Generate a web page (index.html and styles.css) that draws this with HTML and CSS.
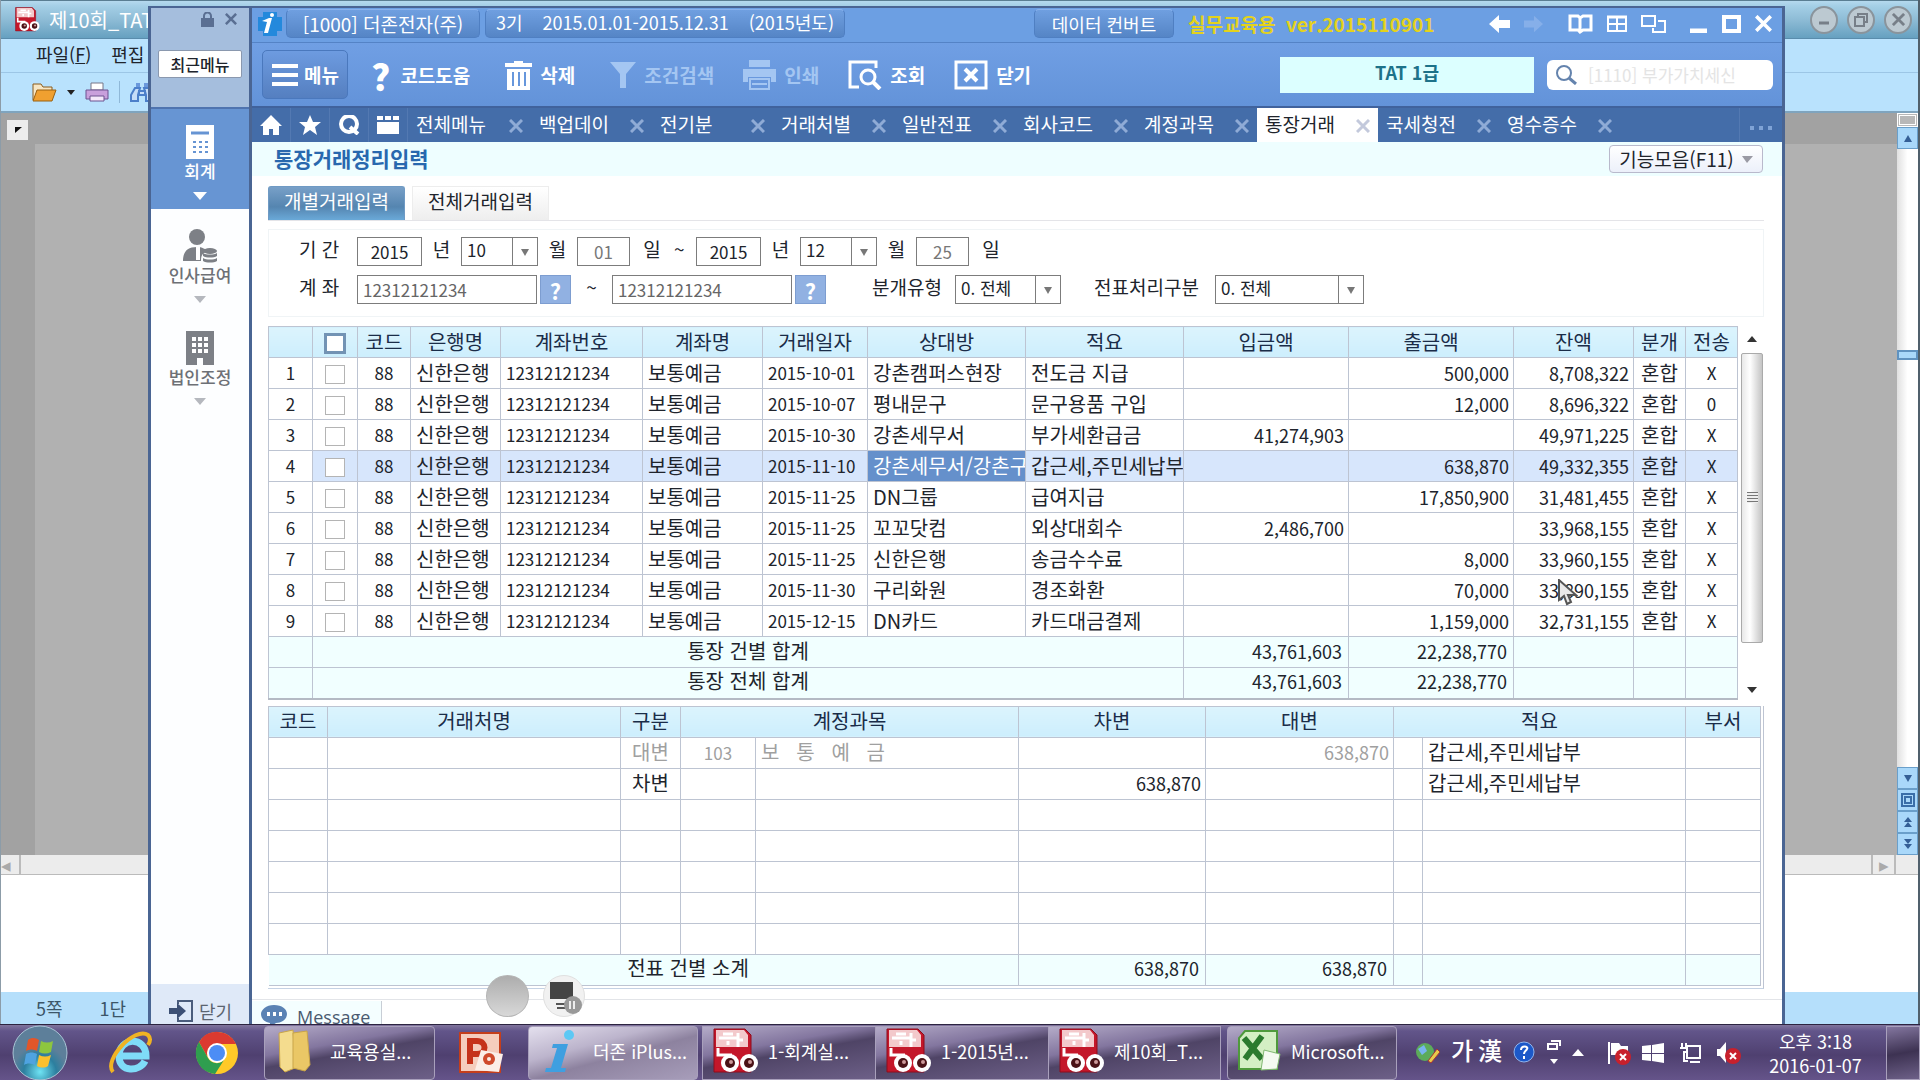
FILE: index.html
```
<!DOCTYPE html>
<html lang="ko">

<head>
    <meta charset="utf-8">
    <meta name="viewport" content="width=device-width, initial-scale=1.0">
    <title>통장거래정리입력</title>
    <link rel="stylesheet" href="styles.css">
</head>

<body>
    <svg width="0" height="0" class="defs">
        <defs>
            <symbol id="hwp" viewBox="0 0 46 46">
                <path d="M1 1h31l6 6v37H1z" fill="#c4172a" stroke="#8d0d1c" />
                <path d="M3 2h28l4 5v12H3z" fill="#f3c9cb" />
                <path d="M10 6h10M6 10h18M15 13v4M5 20v7h14M25 5v14M25 12h5" stroke="#fff" stroke-width="3" fill="none" />
                <circle cx="17" cy="35" r="9" fill="#fff" />
                <circle cx="36" cy="35" r="9" fill="#fff" />
                <circle cx="17" cy="35" r="5" fill="#4a1216" />
                <circle cx="36" cy="35" r="5" fill="#4a1216" />
                <circle cx="18" cy="34" r="2" fill="#c99" />
                <circle cx="37" cy="34" r="2" fill="#c99" />
            </symbol>
            <symbol id="x" viewBox="0 0 14 14">
                <path d="M1 1l12 12M13 1L1 13" stroke="currentColor" stroke-width="3" />
            </symbol>
        </defs>
    </svg>

    <div class="desktop">
        <!-- document window behind -->
        <div class="doc">
            <header class="doc-title">
                <svg width="25" height="25"><use href="#hwp" /></svg>
                <span>제10회_TAT</span>
                <div class="doc-buttons">
                    <button aria-label="최소화"><svg width="12" height="12"><path d="M1 9h10" stroke="#777f88" stroke-width="3" /></svg></button>
                    <button aria-label="이전 크기"><svg width="14" height="14"><path d="M4 4V1h9v8h-3M1 4h9v9H1z" stroke="#777f88" stroke-width="2" fill="none" /></svg></button>
                    <button aria-label="닫기"><svg width="13" height="13" color="#777f88"><use href="#x" /></svg></button>
                </div>
            </header>
            <nav class="doc-menu">
                <a href="#">파일(<u>F</u>)</a>
                <a href="#">편집</a>
            </nav>
            <div class="doc-tools">
                <svg width="25" height="20" viewBox="0 0 25 20"><path d="M1 18V2h8l2 3h9v4" fill="#f7e6c4" stroke="#8a5a1a" /><path d="M5 8h19l-4 11H1z" fill="#f0a030" stroke="#9a6010" /></svg>
                <svg width="8" height="5"><path d="M0 0h8L4 5z" fill="#222" /></svg>
                <svg width="24" height="20" viewBox="0 0 24 20"><path d="M6 1h12v7H6z" fill="#fff" stroke="#778" /><path d="M1 8h22v9H1z" fill="#c9a0dc" stroke="#6d5290" /><path d="M5 14h14v5H5z" fill="#f4e8fa" stroke="#6d5290" /></svg>
                <i></i>
                <svg width="24" height="20" viewBox="0 0 24 20"><path d="M6 1h4v6H6zM14 1h4v6h-4z" fill="#6a98dc" /><path d="M5 6L1 13v6h7v-6l2-7zM19 6l4 7v6h-7v-6l-2-7zM9 9h6v4H9z" fill="#c6ddf8" stroke="#4c7fca" stroke-width="2" /></svg>
            </div>
            <div class="doc-body">
                <div class="doc-canvas">
                    <div class="doc-corner"><svg width="8" height="8"><path d="M1 1h7L1 7z" fill="#111" /></svg></div>
                    <div class="doc-page"></div>
                </div>
                <div class="doc-scroll">
                    <div class="split"></div>
                    <div class="key"><svg width="8" height="7"><path d="M4 0l4 7H0z" fill="#345f96" /></svg></div>
                    <div class="track"></div>
                    <div class="mark"></div>
                    <div class="track track-long"></div>
                    <div class="key"><svg width="8" height="7"><path d="M0 0h8L4 7z" fill="#345f96" /></svg></div>
                    <div class="key"><svg width="14" height="14"><path d="M1 1h12v12H1zM4 4h6v6H4z" fill="none" stroke="#3a6ea8" stroke-width="2" /></svg></div>
                    <div class="key"><svg width="8" height="10"><path d="M4 0l4 5H0zM4 5l4 5H0z" fill="#345f96" /></svg></div>
                    <div class="key"><svg width="8" height="10"><path d="M0 0h8L4 5zM0 5h8l-4 5z" fill="#345f96" /></svg></div>
                </div>
            </div>
            <div class="doc-hscroll">
                <span>◂</span>
                <span class="right">▸</span>
            </div>
            <div class="doc-blank"></div>
            <footer class="doc-status"><span>5쪽</span><span>1단</span></footer>
        </div>

        <!-- accounting program -->
        <div class="app">
            <aside class="side">
                <div class="side-top">
                    <div class="side-icons">
                        <svg width="15" height="15" viewBox="0 0 15 15"><path d="M4 7V4a3 3 0 0 1 7 0v3" fill="none" stroke="#5a6f92" stroke-width="2" /><path d="M1 6h13v9H1z" fill="#5a6f92" /></svg>
                        <svg width="12" height="12" color="#5a6f92"><use href="#x" /></svg>
                    </div>
                    <button class="recent">최근메뉴</button>
                </div>
                <a href="#" class="module on">
                    <svg width="28" height="34" viewBox="0 0 28 34"><path d="M0 0h28v34H0z" fill="#fff" /><path d="M5 8h18" stroke="#6694d3" stroke-width="3" /><path d="M7 17h3m3 0h3m3 0h3M7 22h3m3 0h3m3 0h3M7 27h3m3 0h3m3 0h3" stroke="#6694d3" stroke-width="2" /></svg>
                    <span>회계</span>
                    <svg width="14" height="8"><path d="M0 0h14L7 8z" fill="#fff" /></svg>
                </a>
                <a href="#" class="module">
                    <svg width="34" height="34" viewBox="0 0 34 34" fill="#7d8086"><circle cx="14" cy="8" r="8" /><path d="M0 32c0-9 4-14 14-14 5 0 9 2 11 5-5 0-7 3-7 9z" /><path d="M13 18l4 0 0 13h-4z" fill="#fff" /><ellipse cx="27" cy="22" rx="7" ry="3" /><path d="M20 24c3 2 11 2 14 0v3c-3 2-11 2-14 0zM20 29c3 2 11 2 14 0v3c-3 2-11 2-14 0z" /></svg>
                    <span>인사급여</span>
                    <svg width="12" height="7"><path d="M0 0h12L6 7z" fill="#b5b8be" /></svg>
                </a>
                <a href="#" class="module">
                    <svg width="28" height="34" viewBox="0 0 28 34"><path d="M0 0h28v34H17v-7h-6v7H0z" fill="#7d8086" /><path d="M6 8h4m2 0h4m2 0h4M6 14h4m2 0h4m2 0h4M6 20h4m2 0h4m2 0h4" stroke="#fff" stroke-width="4" /></svg>
                    <span>법인조정</span>
                    <svg width="12" height="7"><path d="M0 0h12L6 7z" fill="#b5b8be" /></svg>
                </a>
                <button class="side-close">
                    <svg width="25" height="24" viewBox="0 0 25 24"><path d="M9 5V2h14v20H9v-3" fill="none" stroke="#4a5c7c" stroke-width="2" /><path d="M0 9h8V4l9 8-9 8v-5H0z" fill="#3d5075" /></svg>
                    닫기
                </button>
            </aside>

            <main class="main">
                <header class="titlebar">
                    <svg class="logo" width="24" height="24" viewBox="0 0 24 24"><path d="M5 0h14v5h5v14h-5v5H5v-5H0V5h5z" fill="#2489dc" /><path d="M4 9l7-3h3l-4 15H6l3-11z" fill="#fff" /><circle cx="14" cy="3" r="2" fill="#fff" /></svg>
                    <button class="pill company">[1000] 더존전자(주)</button>
                    <button class="pill period"><span>3기</span><span>2015.01.01-2015.12.31</span><span>(2015년도)</span></button>
                    <button class="pill convert">데이터 컨버트</button>
                    <span class="version">실무교육용&nbsp; ver.2015110901</span>
                    <div class="win-icons">
                        <svg width="21" height="18" viewBox="0 0 21 18"><path d="M0 9l10-9v5h11v8H10v5z" fill="#fff" /></svg>
                        <svg width="19" height="18" viewBox="0 0 21 18"><path d="M21 9L11 0v5H0v8h11v5z" fill="#86afe9" /></svg>
                        <svg class="gap" width="25" height="20" viewBox="0 0 25 20"><path d="M2 2h8l2 2 3-2h8v14h-8l-3 2-2-2H2zM12 4v13" fill="none" stroke="#fff" stroke-width="3" /></svg>
                        <svg width="20" height="18" viewBox="0 0 20 18"><path d="M1 2h18v14H1zM1 9h18M10 2v14" fill="none" stroke="#fff" stroke-width="2" /><path d="M0 2h20" stroke="#fff" stroke-width="3" /></svg>
                        <svg width="25" height="20" viewBox="0 0 25 20"><path d="M1 2h13v10H1z" fill="none" stroke="#fff" stroke-width="2" /><path d="M17 7h7v11H12v-4" fill="none" stroke="#fff" stroke-width="2" /></svg>
                        <svg class="gap" width="17" height="18"><path d="M0 16h17" stroke="#fff" stroke-width="5" /></svg>
                        <svg width="19" height="18"><path d="M2 2h15v14H2z" fill="none" stroke="#fff" stroke-width="4" /></svg>
                        <svg width="17" height="17" color="#fff"><use href="#x" /></svg>
                    </div>
                </header>

                <div class="toolbar">
                    <button class="menu-btn"><svg width="26" height="24"><path d="M0 3h26M0 12h26M0 21h26" stroke="#fff" stroke-width="4" /></svg>메뉴</button>
                    <button class="t-help"><b>?</b>코드도움</button>
                    <button class="t-del"><svg width="27" height="30" viewBox="0 0 27 30"><path d="M9 3V1h9v2h9v4H0V3z" fill="#fff" /><path d="M2 9h23v21H2z" fill="#fff" /><path d="M8 12v14M14 12v14M20 12v14" stroke="#6797dc" stroke-width="2" /></svg>삭제</button>
                    <button class="t-filter" disabled><svg width="26" height="26"><path d="M0 0h26L16 12v14h-6V12z" fill="#a4c6f2" /></svg>조건검색</button>
                    <button class="t-print" disabled><svg width="33" height="30" viewBox="0 0 33 30"><path d="M6 0h21v7H6zM0 9h33v13h-5v-5H5v5H0z" fill="#a4c6f2" /><path d="M7 19h19v10H7z" fill="none" stroke="#a4c6f2" stroke-width="2" /><path d="M9 24h15" stroke="#a4c6f2" stroke-width="2" /></svg>인쇄</button>
                    <button class="t-find"><svg width="34" height="30" viewBox="0 0 34 30"><path d="M28 8V2H2v25h9" fill="none" stroke="#fff" stroke-width="3" /><circle cx="20" cy="17" r="7" fill="none" stroke="#fff" stroke-width="3" /><path d="M25 22l7 7" stroke="#fff" stroke-width="4" /></svg>조회</button>
                    <button class="t-close"><svg width="34" height="30" viewBox="0 0 34 30"><path d="M2 2h30v26H2z" fill="none" stroke="#fff" stroke-width="3" /><path d="M11 9l12 12M23 9L11 21" stroke="#fff" stroke-width="4" /></svg>닫기</button>
                    <div class="grade">TAT 1급</div>
                    <label class="search">
                        <svg width="22" height="20" viewBox="0 0 22 20"><circle cx="8" cy="8" r="7" fill="none" stroke="#6483ad" stroke-width="2" /><path d="M13 13l7 6" stroke="#6483ad" stroke-width="3" /></svg>
                        <input type="text" aria-label="검색" placeholder="[1110] 부가가치세신">
                    </label>
                </div>

                <nav class="tabs">
                    <a href="#" class="quick"><svg width="22" height="20" viewBox="0 0 22 20"><path d="M11 0l11 11h-3v9h-6v-6H9v6H3v-9H0z" fill="#fff" /></svg></a>
                    <a href="#" class="quick"><svg width="22" height="20" viewBox="0 0 22 20"><path d="M11 0l3 7h8l-6 5 2 8-7-5-7 5 2-8-6-5h8z" fill="#fff" /></svg></a>
                    <a href="#" class="quick"><svg width="21" height="20" viewBox="0 0 21 20"><ellipse cx="10" cy="9" rx="8" ry="8" fill="none" stroke="#fff" stroke-width="4" /><path d="M11 12l8 7" stroke="#fff" stroke-width="4" /></svg></a>
                    <a href="#" class="quick"><svg width="22" height="18" viewBox="0 0 22 18"><path d="M0 0h6v4H0zM8 0h6v4H8zM16 0h6v4h-6zM0 6h22v12H0z" fill="#fff" /></svg></a>
                    <a href="#" class="tab">전체메뉴<svg><use href="#x" /></svg></a>
                    <a href="#" class="tab">백업데이<svg><use href="#x" /></svg></a>
                    <a href="#" class="tab">전기분<svg><use href="#x" /></svg></a>
                    <a href="#" class="tab">거래처별<svg><use href="#x" /></svg></a>
                    <a href="#" class="tab">일반전표<svg><use href="#x" /></svg></a>
                    <a href="#" class="tab">회사코드<svg><use href="#x" /></svg></a>
                    <a href="#" class="tab">계정과목<svg><use href="#x" /></svg></a>
                    <a href="#" class="tab active">통장거래<svg><use href="#x" /></svg></a>
                    <a href="#" class="tab">국세청전<svg><use href="#x" /></svg></a>
                    <a href="#" class="tab">영수증수<svg><use href="#x" /></svg></a>
                    <button class="more" aria-label="더보기"><svg width="22" height="4"><path d="M0 2h4m5 0h4m5 0h4" stroke="#7fa3d6" stroke-width="4" /></svg></button>
                </nav>

                <div class="heading">
                    <h1>통장거래정리입력</h1>
                    <button class="functions">기능모음(F11)<svg width="11" height="7"><path d="M0 0h11L5 7z" fill="#9a9aa4" /></svg></button>
                </div>

                <div class="content">
                    <nav class="subtabs">
                        <a href="#" class="on">개별거래입력</a>
                        <a href="#">전체거래입력</a>
                    </nav>

                    <form class="filters">
                        <div class="line">
                            <label class="first" for="y1">기 간</label>
                            <input id="y1" class="year" value="2015"><label class="unit" for="y1">년</label>
                            <span class="combo month"><select id="m1"><option>10</option></select></span><label class="unit" for="m1">월</label>
                            <input id="d1" class="day" value="01"><label class="unit" for="d1">일</label>
                            <span class="unit">~</span>
                            <input id="y2" class="year" value="2015"><label class="unit" for="y2">년</label>
                            <span class="combo month"><select id="m2"><option>12</option></select></span><label class="unit" for="m2">월</label>
                            <input id="d2" class="day" value="25"><label class="unit" for="d2">일</label>
                        </div>
                        <div class="line">
                            <label class="first" for="a1">계 좌</label>
                            <input id="a1" class="account" value="12312121234"><button type="button" class="help">?</button>
                            <span class="tilde">~</span>
                            <input class="account" aria-label="계좌 끝" value="12312121234"><button type="button" class="help">?</button>
                            <label class="kind" for="s1">분개유형</label>
                            <span class="combo kind-box"><select id="s1"><option>0. 전체</option></select></span>
                            <label class="state" for="s2">전표처리구분</label>
                            <span class="combo state-box"><select id="s2"><option>0. 전체</option></select></span>
                        </div>
                    </form>

                    <div class="ledger">
                        <table>
                            <colgroup>
                                <col style="width:44px"><col style="width:45px"><col style="width:53px"><col style="width:90px"><col style="width:142px"><col style="width:120px"><col style="width:105px"><col style="width:158px"><col style="width:158px"><col style="width:165px"><col style="width:165px"><col style="width:120px"><col style="width:52px"><col style="width:52px">
                            </colgroup>
                            <thead>
                                <tr><th></th><th><input type="checkbox" aria-label="전체 선택"></th><th>코드</th><th>은행명</th><th>계좌번호</th><th>계좌명</th><th>거래일자</th><th>상대방</th><th>적요</th><th>입금액</th><th>출금액</th><th>잔액</th><th>분개</th><th>전송</th></tr>
                            </thead>
                            <tbody>
                                <tr><td class="c">1</td><td class="c"><input type="checkbox" aria-label="1"></td><td class="c">88</td><td>신한은행</td><td class="d">12312121234</td><td>보통예금</td><td class="d">2015-10-01</td><td>강촌캠퍼스현장</td><td>전도금 지급</td><td class="n"></td><td class="n">500,000</td><td class="n">8,708,322</td><td class="k">혼합</td><td class="c">X</td></tr>
                                <tr><td class="c">2</td><td class="c"><input type="checkbox" aria-label="2"></td><td class="c">88</td><td>신한은행</td><td class="d">12312121234</td><td>보통예금</td><td class="d">2015-10-07</td><td>평내문구</td><td>문구용품 구입</td><td class="n"></td><td class="n">12,000</td><td class="n">8,696,322</td><td class="k">혼합</td><td class="c">0</td></tr>
                                <tr><td class="c">3</td><td class="c"><input type="checkbox" aria-label="3"></td><td class="c">88</td><td>신한은행</td><td class="d">12312121234</td><td>보통예금</td><td class="d">2015-10-30</td><td>강촌세무서</td><td>부가세환급금</td><td class="n">41,274,903</td><td class="n"></td><td class="n">49,971,225</td><td class="k">혼합</td><td class="c">X</td></tr>
                                <tr class="selected"><td class="c">4</td><td class="c"><input type="checkbox" aria-label="4"></td><td class="c">88</td><td>신한은행</td><td class="d">12312121234</td><td>보통예금</td><td class="d">2015-11-10</td><td class="cell-on">강촌세무서/강촌구</td><td>갑근세,주민세납부</td><td class="n"></td><td class="n">638,870</td><td class="n">49,332,355</td><td class="k">혼합</td><td class="c">X</td></tr>
                                <tr><td class="c">5</td><td class="c"><input type="checkbox" aria-label="5"></td><td class="c">88</td><td>신한은행</td><td class="d">12312121234</td><td>보통예금</td><td class="d">2015-11-25</td><td>DN그룹</td><td>급여지급</td><td class="n"></td><td class="n">17,850,900</td><td class="n">31,481,455</td><td class="k">혼합</td><td class="c">X</td></tr>
                                <tr><td class="c">6</td><td class="c"><input type="checkbox" aria-label="6"></td><td class="c">88</td><td>신한은행</td><td class="d">12312121234</td><td>보통예금</td><td class="d">2015-11-25</td><td>꼬꼬닷컴</td><td>외상대회수</td><td class="n">2,486,700</td><td class="n"></td><td class="n">33,968,155</td><td class="k">혼합</td><td class="c">X</td></tr>
                                <tr><td class="c">7</td><td class="c"><input type="checkbox" aria-label="7"></td><td class="c">88</td><td>신한은행</td><td class="d">12312121234</td><td>보통예금</td><td class="d">2015-11-25</td><td>신한은행</td><td>송금수수료</td><td class="n"></td><td class="n">8,000</td><td class="n">33,960,155</td><td class="k">혼합</td><td class="c">X</td></tr>
                                <tr><td class="c">8</td><td class="c"><input type="checkbox" aria-label="8"></td><td class="c">88</td><td>신한은행</td><td class="d">12312121234</td><td>보통예금</td><td class="d">2015-11-30</td><td>구리화원</td><td>경조화환</td><td class="n"></td><td class="n">70,000</td><td class="n">33,890,155</td><td class="k">혼합</td><td class="c">X</td></tr>
                                <tr><td class="c">9</td><td class="c"><input type="checkbox" aria-label="9"></td><td class="c">88</td><td>신한은행</td><td class="d">12312121234</td><td>보통예금</td><td class="d">2015-12-15</td><td>DN카드</td><td>카드대금결제</td><td class="n"></td><td class="n">1,159,000</td><td class="n">32,731,155</td><td class="k">혼합</td><td class="c">X</td></tr>
                            </tbody>
                            <tfoot>
                                <tr><td></td><td colspan="8" class="sum">통장 건별 합계</td><td class="n">43,761,603</td><td class="n">22,238,770</td><td></td><td></td><td></td></tr>
                                <tr><td></td><td colspan="8" class="sum">통장 전체 합계</td><td class="n">43,761,603</td><td class="n">22,238,770</td><td></td><td></td><td></td></tr>
                            </tfoot>
                        </table>
                        <div class="scroll">
                            <svg width="10" height="6"><path d="M5 0l5 6H0z" fill="#333" /></svg>
                            <div class="thumb"><i></i></div>
                            <svg width="10" height="6"><path d="M0 0h10L5 6z" fill="#333" /></svg>
                        </div>
                    </div>

                    <div class="journal">
                        <table>
                            <colgroup>
                                <col style="width:59px"><col style="width:293px"><col style="width:60px"><col style="width:75px"><col style="width:263px"><col style="width:187px"><col style="width:188px"><col style="width:29px"><col style="width:263px"><col style="width:75px">
                            </colgroup>
                            <thead>
                                <tr><th>코드</th><th>거래처명</th><th>구분</th><th colspan="2">계정과목</th><th>차변</th><th>대변</th><th colspan="2">적요</th><th>부서</th></tr>
                            </thead>
                            <tbody>
                                <tr><td></td><td></td><td class="k off">대변</td><td class="c off">103</td><td class="off spaced">보   통   예   금</td><td></td><td class="n off">638,870</td><td></td><td>갑근세,주민세납부</td><td></td></tr>
                                <tr><td></td><td></td><td class="k">차변</td><td></td><td></td><td class="n">638,870</td><td></td><td></td><td>갑근세,주민세납부</td><td></td></tr>
                                <tr><td></td><td></td><td></td><td></td><td></td><td></td><td></td><td></td><td></td><td></td></tr>
                                <tr><td></td><td></td><td></td><td></td><td></td><td></td><td></td><td></td><td></td><td></td></tr>
                                <tr><td></td><td></td><td></td><td></td><td></td><td></td><td></td><td></td><td></td><td></td></tr>
                                <tr><td></td><td></td><td></td><td></td><td></td><td></td><td></td><td></td><td></td><td></td></tr>
                                <tr><td></td><td></td><td></td><td></td><td></td><td></td><td></td><td></td><td></td><td></td></tr>
                            </tbody>
                            <tfoot>
                                <tr><td colspan="2" class="open"></td><td colspan="2" class="sum open">전표 건별 소계</td><td></td><td class="n">638,870</td><td class="n">638,870</td><td></td><td></td><td></td></tr>
                            </tfoot>
                        </table>
                    </div>
                </div>

                <div class="bottom">
                    <a href="#" class="message"><svg width="26" height="22" viewBox="0 0 26 22"><path d="M13 0c8 0 13 4 13 9s-5 9-11 9l-6 4v-4C3 17 0 13 0 9s5-9 13-9z" fill="#5a82b4" /><path d="M6 9h3m3 0h3m3 0h3" stroke="#fff" stroke-width="4" /></svg>Message</a>
                </div>
            </main>
        </div>

        <!-- recorder badges and pointer float above the windows -->
        <div class="badge ball"></div>
        <div class="badge screen"><svg width="34" height="34" viewBox="0 0 34 34"><path d="M2 2h23v17H2z" fill="#444" /><path d="M8 24h10M9 28h8" stroke="#555" stroke-width="2" /><circle cx="25" cy="25" r="9" fill="#999" /><path d="M22 21v8M26 21v8" stroke="#eee" stroke-width="2" /></svg></div>
        <svg class="pointer" width="20" height="27" viewBox="0 0 20 27"><path d="M1 1v20l5-4 3 8 4-2-3-7h8z" fill="#e9e9e9" stroke="#555" stroke-width="2" /></svg>
    </div>

    <footer class="taskbar">
        <button class="start" aria-label="시작"><svg width="58" height="56" viewBox="0 0 58 56"><defs><radialGradient id="orb" cy=".85"><stop offset="0" stop-color="#6fe4f4" /><stop offset=".6" stop-color="#2c7f9f" /><stop offset="1" stop-color="#5d7f9a" /></radialGradient></defs><circle cx="29" cy="28" r="27" fill="url(#orb)" stroke="#a8c4d4" /><path d="M17 15c4-3 8-2 11 0l-2 11c-4-2-7-2-11 0z" fill="#e2562a" /><path d="M30 16c4 2 8 2 12 0l-2 11c-4 2-8 2-12 0z" fill="#8dc63f" /><path d="M15 29c4-2 7-2 11 0l-2 11c-4-2-8-2-11 0z" fill="#4fa3e0" /><path d="M28 30c4 2 8 2 12 0l-3 11c-3 2-7 2-11 0z" fill="#fbc02d" /></svg></button>
        <button class="pin ie" aria-label="Internet Explorer"><svg width="46" height="46" viewBox="0 0 46 46"><path d="M11 26h28c0-20-27-19-27 0 0 17 21 16 26 5" fill="none" stroke="#7fdcf8" stroke-width="7" /><path d="M6 42C-4 30 28-4 41 5c3 3 2 7 0 10" fill="none" stroke="#f0b323" stroke-width="4" /></svg></button>
        <button class="pin chrome" aria-label="Chrome"><svg width="44" height="44" viewBox="0 0 44 44"><circle cx="22" cy="22" r="21" fill="#ffc928" /><path d="M4 11a21 21 0 0 1 37 2H22a10 10 0 0 0-9 14z" fill="#db3a30" /><path d="M4 11A21 21 0 0 0 20 43l9-14a10 10 0 0 1-16-2z" fill="#2f9e4f" /><circle cx="22" cy="22" r="10" fill="#fff" /><circle cx="22" cy="22" r="8" fill="#4c8df5" /></svg></button>
        <button class="task folder"><svg width="36" height="44" viewBox="0 0 36 44"><path d="M2 4l14-3 2 38-10 4-5-5z" fill="#f4dc8e" stroke="#c9a548" /><path d="M16 4l14-2 3 34-5 6-12-3z" fill="#eac766" stroke="#c9a548" /></svg>교육용실...</button>
        <button class="pin ppt" aria-label="PowerPoint"><svg width="46" height="42" viewBox="0 0 46 42"><path d="M2 1h40v39H2z" fill="#f5cdbd" stroke="#c43e1c" stroke-width="2" /><path d="M12 32V9h7c10 0 10 13 0 13h-6" fill="none" stroke="#c5321a" stroke-width="6" /><path d="M23 18l22 4-4 18-24-2z" fill="#fbeee8" /><circle cx="31" cy="27" r="6" fill="#cf4a2c" /><circle cx="31" cy="27" r="2" fill="#fbeee8" /></svg></button>
        <button class="task lit"><svg width="34" height="44" viewBox="0 0 34 44"><circle cx="26" cy="6" r="5" fill="#5cc8f4" /><path d="M10 15h15l-7 24h5l-1 4H2l1-4h5l6-20h-5z" fill="#3f9fe0" /></svg>더존 iPlus...</button>
        <div class="group">
            <button class="task"><svg width="46" height="46"><use href="#hwp" /></svg>1-회계실...</button>
            <button class="task"><svg width="46" height="46"><use href="#hwp" /></svg>1-2015년...</button>
            <button class="task"><svg width="46" height="46"><use href="#hwp" /></svg>제10회_T...</button>
        </div>
        <button class="task excel"><svg width="44" height="42" viewBox="0 0 44 42"><path d="M8 1h32v38H2V8z" fill="#d4efc4" stroke="#4f9a3c" stroke-width="2" /><path d="M7 8l18 21M25 6L8 29" stroke="#2b7a2e" stroke-width="6" /><path d="M27 20l16 4-3 15-16 1z" fill="#f4faf0" stroke="#82b873" /></svg>Microsoft...</button>

        <div class="tray">
            <svg width="24" height="22" viewBox="0 0 24 22"><circle cx="9" cy="10" r="9" fill="#5cab5a" /><path d="M2 7l6-4 3 6-5 4z" fill="#78b5ee" /><path d="M12 19L21 7l3 3-9 11z" fill="#e9c94b" stroke="#a33" /></svg>
            <b class="ime">가</b><b class="ime">漢</b>
            <svg width="23" height="23" viewBox="0 0 23 23"><circle cx="11" cy="11" r="10" fill="#1c58c8" stroke="#8fb4ee" /><path d="M8 9c0-5 8-4 6-1-1 2-3 2-3 5M11 15v3" stroke="#fff" stroke-width="2" fill="none" /></svg>
            <svg width="14" height="30" viewBox="0 0 14 30"><path d="M4 3h9v5M1 6h9v5H1z" fill="none" stroke="#fff" stroke-width="2" /><path d="M3 21h8l-4 5z" fill="#fff" /></svg>
            <svg width="12" height="7"><path d="M6 0l6 7H0z" fill="#fff" /></svg>
            <svg class="late" width="24" height="24" viewBox="0 0 24 24"><path d="M2 1v22" stroke="#fff" stroke-width="2" /><path d="M4 2h8l2 3h7v9H4z" fill="#fff" /><circle cx="16" cy="16" r="8" fill="#c8202c" /><path d="M13 13l6 6M19 13l-6 6" stroke="#fff" stroke-width="2" /></svg>
            <svg width="22" height="22" viewBox="0 0 22 22"><path d="M0 4l9-1v8H0zM10 3l12-2v10H10zM0 12h9v7l-9-1zM10 12h12v9l-12-2z" fill="#fff" /></svg>
            <svg class="net" width="23" height="22" viewBox="0 0 23 22"><path d="M8 4h13v12H8zM11 20h10M3 1v5m4-5v5M1 6h7v4H5v9h4" fill="none" stroke="#fff" stroke-width="2" /></svg>
            <svg class="net" width="24" height="24" viewBox="0 0 24 24"><path d="M0 8h3l6-7v21l-6-7H0z" fill="#fff" /><circle cx="16" cy="15" r="8" fill="#c8202c" /><path d="M13 12l6 6M19 12l-6 6" stroke="#fff" stroke-width="2" /></svg>
        </div>
        <div class="clock"><span>오후 3:18</span><span>2016-01-07</span></div>
        <button class="show" aria-label="바탕 화면 보기"></button>
    </footer>
</body>

</html>
```
FILE: styles.css
```
* {
    box-sizing: border-box;
}

body {
    margin: 0;
    height: 100vh;
    display: flex;
    flex-direction: column;
    overflow: hidden;
    font-family: "Noto Sans CJK KR", sans-serif;
    font-size: 19px;
    line-height: 24px;
    color: #20242c;
}

button,
input,
select {
    font: inherit;
    color: inherit;
    margin: 0;
    padding: 0;
    border: 0;
    background: none;
    border-radius: 0;
    white-space: nowrap;
}

a {
    color: inherit;
    text-decoration: none;
}

svg {
    flex: none;
    display: block;
}

.defs {
    position: absolute;
}

.desktop {
    flex: 1;
    min-height: 0;
    position: relative;
    overflow: hidden;
}

/* document window */
.doc {
    height: 100%;
    display: flex;
    flex-direction: column;
    background: #fff;
    border-right: 2px solid #50606c;
    border-left: 1px solid #8c9ca8;
}

.doc-title {
    height: 39px;
    display: flex;
    align-items: center;
    padding: 0 6px 0 14px;
    gap: 9px;
    color: #fff;
    font-size: 20px;
    border-top: 1px solid #5a7e92;
    border-bottom: 1px solid #5a8cac;
    background: linear-gradient(#b5d9ee 0, #a4cfe6 5px, #8ebcd6 50%, #66a0c0 100%);
}

.doc-buttons {
    margin-left: auto;
    display: flex;
    gap: 9px;
}

.doc-buttons button {
    width: 28px;
    height: 28px;
    border-radius: 50%;
    border: 2px solid #8a949c;
    background: #bcc9d1;
    display: flex;
    align-items: center;
    justify-content: center;
}

.doc-menu {
    height: 34px;
    padding: 3px 0 0 35px;
    display: flex;
    gap: 20px;
    font-size: 18px;
    background: #b9e2fd;
    border-bottom: 1px solid #9cc6e6;
}

.doc-tools {
    height: 40px;
    padding-left: 31px;
    display: flex;
    align-items: center;
    gap: 10px;
    background: #b9e2fd;
    border-bottom: 2px solid #7fa4be;
}

.doc-tools i {
    width: 1px;
    height: 22px;
    background: #8fb8d8;
}

.doc-body {
    flex: 1;
    display: flex;
}

.doc-canvas {
    flex: 1;
    display: flex;
    flex-direction: column;
    background: #a2a2a2;
}

.doc-corner {
    width: 21px;
    height: 20px;
    margin: 7px 0 4px 6px;
    background: #ededed;
    display: flex;
    align-items: center;
    justify-content: center;
}

.doc-page {
    flex: 1;
    margin-left: 34px;
    background: #b1b1b1;
}

.doc-scroll {
    width: 21px;
    display: flex;
    flex-direction: column;
}

.split {
    height: 14px;
    border: 3px double #fff;
    background: #b8b8b8;
}

.key {
    height: 22px;
    display: flex;
    align-items: center;
    justify-content: center;
    background: #a9d8fa;
    border: 1px solid #6a9fca;
}

.track {
    flex: 200;
    background: linear-gradient(90deg, #e0e0e0, #fff 50%);
}

.track-long {
    flex: 405;
}

.mark {
    height: 10px;
    background: #a9d8fa;
    border: 2px solid #5f92c0;
}

.doc-hscroll {
    height: 20px;
    display: flex;
    padding-right: 22px;
    background: #ececec;
    border-bottom: 1px solid #bbb;
    color: #aaa;
    line-height: 18px;
}

.doc-hscroll span {
    width: 20px;
    border-right: 2px solid #bbb;
}

.doc-hscroll .right {
    width: 25px;
    margin-left: auto;
    text-align: center;
    border-left: 2px solid #bbb;
}

.doc-blank {
    height: 117px;
}

.doc-status {
    height: 32px;
    padding: 4px 0 0 35px;
    display: flex;
    gap: 37px;
    font-size: 18px;
    color: #3b5568;
    background: #b5dffb;
}

/* program window */
.app {
    position: absolute;
    top: 6px;
    bottom: 0;
    left: 148px;
    right: 135px;
    display: flex;
    overflow: hidden;
    background: #fff;
    border: solid #4a6593;
    border-width: 2px 3px 0;
}

.side {
    width: 98px;
    display: flex;
    flex-direction: column;
    background: #fdfeff;
}

.side-top {
    height: 101px;
    background: #a5bedd;
    border-bottom: 2px solid #4f74af;
    text-align: center;
}

.side-icons {
    height: 42px;
    padding: 4px 12px 0 0;
    display: flex;
    gap: 10px;
    justify-content: flex-end;
}

.side-icons svg + svg {
    margin-top: 1px;
}

.recent {
    width: 84px;
    height: 28px;
    background: #fff;
    border: 1px solid #8a98ae;
    border-radius: 2px;
    font-size: 16px;
    font-weight: 500;
    line-height: 22px;
}

.module {
    height: 102px;
    padding-top: 18px;
    display: flex;
    flex-direction: column;
    align-items: center;
    color: #6d7076;
    font-size: 17px;
    font-weight: 500;
}

.module span {
    margin-bottom: 9px;
}

.module.on {
    height: 100px;
    padding-top: 16px;
    margin-bottom: 2px;
    background: #6795d3;
    color: #fff;
}

.side-close {
    margin-top: auto;
    height: 40px;
    padding: 15px 0 0 18px;
    display: flex;
    gap: 5px;
    background: #dfe9f8;
    color: #5b6470;
    font-size: 18px;
}

.main {
    flex: 1;
    min-width: 0;
    display: flex;
    flex-direction: column;
    border-left: 3px solid #4a6593;
}

.main > * {
    flex-shrink: 0;
}

.titlebar {
    height: 35px;
    padding: 0 0 3px 6px;
    display: flex;
    align-items: center;
    background: #6c9fe3;
    border-bottom: 1px solid #5483c6;
    color: #fff;
    font-size: 18px;
}

.pill {
    height: 29px;
    border-radius: 5px;
    background: linear-gradient(#6f9fe0, #5585c6);
    border: 1px solid #4f7fc2;
    border-top-color: #8ab2ec;
    line-height: 24px;
}

.company {
    width: 194px;
    margin: 0 5px 0 4px;
    font-size: 19px;
}

.period {
    width: 360px;
    display: flex;
    justify-content: center;
    gap: 20px;
}

.convert {
    width: 140px;
    margin-left: auto;
}

.version {
    width: 301px;
    margin-left: 14px;
    color: #e4d21c;
    font-size: 19px;
    font-weight: 700;
}

.win-icons {
    width: 293px;
    padding-right: 10px;
    display: flex;
    align-items: center;
    justify-content: space-between;
}

.win-icons .gap {
    margin-left: 10px;
}

.toolbar {
    height: 65px;
    padding: 0 9px 0 10px;
    display: flex;
    align-items: center;
    background: linear-gradient(#709fe4, #6393d9);
    border-bottom: 2px solid #40629c;
    color: #fff;
    font-weight: 700;
}

.toolbar button {
    display: flex;
    align-items: center;
    gap: 8px;
}

.toolbar button:disabled {
    color: #a4c6f2;
}

.toolbar .menu-btn {
    width: 86px;
    height: 49px;
    padding-left: 9px;
    gap: 6px;
    border: 1px solid #4a78bd;
    border-radius: 5px;
    background: linear-gradient(#6d9be0, #557fc0);
}

.toolbar .t-help {
    margin-left: 23px;
    gap: 10px;
}

.t-help b {
    font-size: 36px;
    line-height: 40px;
}

.t-del,
.t-filter {
    margin-left: 35px;
}

.t-print,
.t-find,
.t-close {
    margin-left: 29px;
}

.grade {
    width: 254px;
    height: 36px;
    margin-left: auto;
    background: #dcffff;
    color: #1d7289;
    font-size: 18px;
    line-height: 30px;
    text-align: center;
}

.search {
    width: 226px;
    height: 30px;
    margin-left: 13px;
    padding-left: 9px;
    display: flex;
    align-items: center;
    gap: 10px;
    background: #fff;
    border-radius: 6px;
}

.search input {
    flex: 1;
    min-width: 0;
    font-size: 17px;
    font-weight: 400;
}

.search input::placeholder {
    color: #e4e4e4;
}

.tabs {
    height: 34px;
    display: flex;
    background: #446da9;
    color: #fff;
}

.quick {
    width: 39px;
    display: flex;
    align-items: center;
    justify-content: center;
    border-right: 1px solid #5379b2;
}

.tab {
    width: 121px;
    padding: 0 8px 3px;
    display: flex;
    align-items: center;
    justify-content: space-between;
}

.quick + .tab {
    width: 123px;
}

.tab svg {
    width: 14px;
    height: 14px;
    margin-top: 4px;
    color: #8fabd6;
}

.tab.active {
    background: #fff;
    color: #20242c;
}

.tab.active svg {
    color: #c3c9dc;
}

.more {
    width: 43px;
    margin-left: auto;
    padding: 6px 0 0 10px;
    border-left: 1px solid #5379b2;
}

.heading {
    height: 34px;
    padding: 3px 19px 0 22px;
    display: flex;
    justify-content: space-between;
    background: #eefeff;
}

h1 {
    margin: 0;
    font-size: 21px;
    line-height: 26px;
    font-weight: 700;
    color: #2868ae;
}

.functions {
    width: 154px;
    height: 28px;
    display: flex;
    align-items: center;
    justify-content: center;
    gap: 8px;
    border: 1px solid #b9b9cc;
    border-radius: 4px;
    background: linear-gradient(#fff, #ecf0fa);
}

.content {
    padding: 10px 18px 0 16px;
}

.subtabs {
    display: flex;
    gap: 7px;
    border-bottom: 1px solid #e4e4e8;
}

.subtabs a {
    width: 137px;
    height: 34px;
    line-height: 28px;
    text-align: center;
    background: linear-gradient(#fff, #eee);
    border: 1px solid #ededed;
    border-bottom: 0;
}

.subtabs .on {
    background: linear-gradient(#78a0c8, #5585b0 60%, #6aa9d8);
    border-color: #6f9ac4;
    border-radius: 3px 3px 0 0;
    color: #fff;
}

.filters {
    height: 88px;
    margin: 8px 0 9px;
    padding: 7px 0 0 30px;
    border: 1px solid #f0f4f6;
    display: flex;
    flex-direction: column;
    gap: 9px;
}

.line {
    display: flex;
    height: 29px;
}

.line input,
.combo {
    height: 29px;
    border: 1px solid #7c7c7c;
    background: #fff;
    font-size: 17px;
}

.first {
    width: 58px;
}

.year {
    width: 65px;
    text-align: center;
}

.day {
    width: 53px;
    text-align: center;
    color: #777;
}

.unit {
    width: 39px;
    text-align: center;
}

.day + .unit {
    width: 44px;
}

.day + .unit + span {
    width: 22px;
    text-align: left;
}

.combo {
    position: relative;
}

.combo::before {
    content: "";
    position: absolute;
    top: 0;
    bottom: 0;
    right: 24px;
    width: 1px;
    background: #7c7c7c;
}

.combo::after {
    content: "";
    position: absolute;
    top: 11px;
    right: 8px;
    border: solid transparent;
    border-width: 7px 4px 0;
    border-top-color: #777;
}

.combo select {
    width: 100%;
    height: 23px;
    padding-left: 5px;
    appearance: none;
}

.month {
    width: 77px;
}

.line .account {
    width: 180px;
    padding-left: 5px;
    color: #666;
}

.help {
    width: 31px;
    height: 29px;
    margin-left: 3px;
    background: #91b1e2;
    border: 1px solid #7d9dd0;
    color: #fff;
    font-size: 22px;
    font-weight: 700;
}

.tilde {
    width: 41px;
    text-align: center;
}

.kind {
    width: 83px;
    margin-left: 46px;
}

.kind-box {
    width: 106px;
    margin-right: 33px;
}

.state {
    width: 121px;
}

.state-box {
    width: 149px;
}

table {
    width: 100%;
    table-layout: fixed;
    border-collapse: collapse;
}

tr {
    height: 31px;
}

th,
td {
    padding: 0 0 1px 5px;
    border: 1px solid #bdc4d2;
    font-size: 20px;
    font-weight: 400;
    text-align: left;
    white-space: nowrap;
    overflow: hidden;
    line-height: 24px;
}

th {
    padding-left: 0;
    text-align: center;
    background: linear-gradient(#dcf4fd, #cdeefd);
    color: #1a2c48;
}

.c {
    padding: 0;
    font-size: 17px;
    text-align: center;
}

.d {
    font-size: 17px;
}

.k {
    padding-left: 0;
    text-align: center;
}

.n {
    padding-right: 4px;
    font-size: 18px;
    text-align: right;
}

tfoot td {
    padding-bottom: 3px;
    background: #f1ffff;
}

.sum {
    padding-left: 0;
    text-align: center;
}

tfoot .n {
    padding-right: 6px;
}

td input[type="checkbox"],
th input[type="checkbox"] {
    appearance: none;
    display: block;
    width: 20px;
    height: 19px;
    margin: 3px auto 0;
    background: #fff;
    border: 1px solid #b4b4b4;
}

th input[type="checkbox"] {
    width: 22px;
    height: 21px;
    border: 3px solid #7393b4;
}

.selected td {
    background: #d7e6fc;
}

.selected td:first-child {
    background: #fff;
}

.selected .cell-on {
    background: #6590cb;
    color: #fff;
}

.ledger {
    display: flex;
    margin-bottom: 6px;
}

.ledger table {
    flex: 1;
    border-bottom: 2px solid #b4bac4;
}

.scroll {
    width: 26px;
    padding: 10px 1px 7px 3px;
    display: flex;
    flex-direction: column;
    align-items: center;
}

.thumb {
    width: 22px;
    flex: 1;
    margin: 11px 0 44px;
    display: flex;
    align-items: center;
    justify-content: center;
    border: 1px solid #aaa;
    border-radius: 2px;
    background: linear-gradient(90deg, #e8e8e8, #fff 40%, #c4c4c4);
}

.thumb i {
    width: 11px;
    height: 11px;
    background: repeating-linear-gradient(#777 0 1px, #eee 1px 3px);
}

.journal {
    padding: 0 3px 2px 0;
    border-right: 1px solid #bdc4d2;
    border-bottom: 1px solid #c4d2e4;
}

.off {
    color: #a0a0a0;
}

.spaced {
    white-space: pre;
}

.open {
    border-right: 0;
    border-left: 0;
}

.open + td {
    border-left: 0;
}

.bottom {
    margin-top: 10px;
    border-top: 1px solid #e2e4e8;
    padding-top: 1px;
}

.message {
    width: 130px;
    height: 40px;
    padding: 4px 0 0 9px;
    display: flex;
    gap: 10px;
    background: #f4feff;
    border-right: 1px solid #c8ced6;
    color: #4a5a70;
    font-family: "Open Sans", sans-serif;
    font-size: 18px;
}

.badge {
    position: absolute;
    bottom: 7px;
    border-radius: 50%;
}

.ball {
    left: 486px;
    width: 43px;
    height: 42px;
    background: linear-gradient(#adadad, #d8d8d8);
    border: 1px solid #b4b4b4;
}

.screen {
    left: 543px;
    width: 42px;
    height: 42px;
    padding: 4px;
    background: #f1f1f1;
    border: 1px solid #e0e0e0;
}

.pointer {
    position: absolute;
    left: 1558px;
    top: 579px;
}

/* taskbar */
.taskbar {
    height: 56px;
    display: flex;
    align-items: center;
    border-top: 1px solid #2c2440;
    background: linear-gradient(#80749c 0, #62558a 6px, #4f4070 55%, #65548a);
    color: #fff;
    font-size: 18px;
}

.start {
    margin-left: 11px;
}

.ie {
    margin-left: 38px;
}

.chrome {
    margin-left: 42px;
}

.task {
    width: 173px;
    height: 54px;
    padding: 0 8px 4px;
    display: flex;
    align-items: center;
    gap: 8px;
    border: 1px solid #a9a0bc;
    border-radius: 4px;
    background: linear-gradient(170deg, #b4abc8, #83769f 35%, #4f4466 50%, #6d6088);
}

.folder {
    width: 171px;
    margin-left: 25px;
    padding-left: 12px;
    gap: 17px;
}

.ppt {
    margin-left: 23px;
}

.lit {
    width: 170px;
    margin: 0 4px 0 24px;
    padding-left: 14px;
    gap: 16px;
    background: linear-gradient(165deg, #e4e0ee, #bcb4cc 35%, #8d829f 55%, #a79dba);
}

.group {
    display: flex;
    margin-right: 6px;
}

.group .task {
    padding-left: 10px;
    gap: 9px;
    border-radius: 0;
    border-right-width: 0;
}

.group .task:last-child {
    border-right-width: 1px;
}

.excel {
    width: 170px;
    padding-left: 9px;
    gap: 10px;
}

.tray {
    margin-left: auto;
    display: flex;
    align-items: center;
    gap: 11px;
}

.ime {
    font-size: 24px;
    line-height: 28px;
    font-weight: 500;
    margin-bottom: 6px;
}

.ime + .ime {
    margin-left: -6px;
}

.tray .late {
    margin-left: 12px;
}

.tray .net {
    margin-left: 4px;
}

.clock {
    width: 145px;
    padding-left: 4px;
    display: flex;
    flex-direction: column;
    align-items: center;
    line-height: 24px;
}

.show {
    width: 34px;
    height: 54px;
    border: 1px solid #a9a0bc;
    background: linear-gradient(170deg, #83769f, #3d3252 50%, #6d6088);
}
```
